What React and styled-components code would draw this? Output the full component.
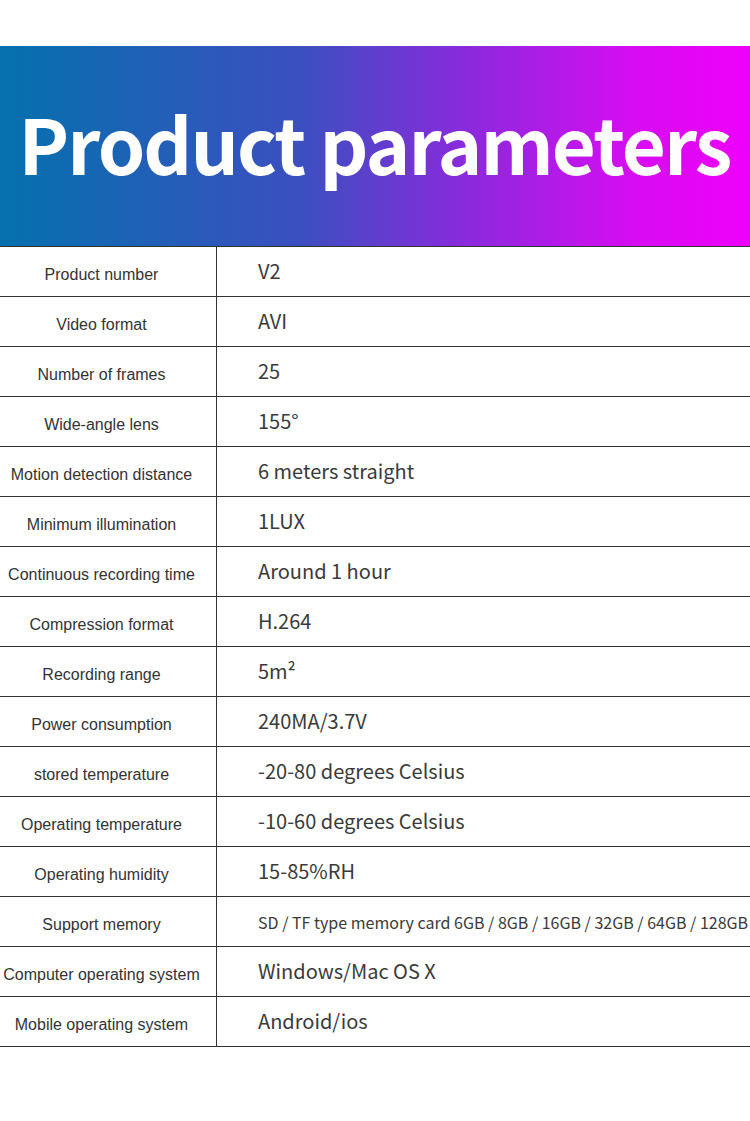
import React from "react";
import styled, { createGlobalStyle } from "styled-components";

const Global = createGlobalStyle`
  html, body { margin: 0; padding: 0; background: #fff; }
  body { width: 750px; }
`;

const Page = styled.div`
  width: 750px;
  padding-top: 46px;
  padding-bottom: 75px;
  background: #fff;
`;

const Banner = styled.div`
  height: 200px;
  background: linear-gradient(90deg, #0571ad 0%, #3c4fc0 40%, #8a2adc 62%, #d80cf2 85%, #ee00fa 100%);
  display: flex;
  align-items: center;
  justify-content: center;
  overflow: hidden;
`;

const Title = styled.h1`
  margin: 0;
  padding-right: 1px;
  color: #fff;
  font-family: "Noto Sans CJK SC", "Noto Sans", sans-serif;
  font-weight: 700;
  font-size: 76px;
  letter-spacing: -1.9px;
  line-height: 1;
  white-space: nowrap;
  transform: translateY(-4px);
`;

const Table = styled.div`
  border-top: 1px solid #333;
`;

const Row = styled.div`
  display: grid;
  grid-template-columns: 217px 1fr;
  height: 50px;
  box-sizing: border-box;
  border-bottom: 1px solid #333;
`;

const Label = styled.div`
  border-right: 1px solid #333;
  display: flex;
  align-items: center;
  justify-content: center;
  padding-top: 7px;
  padding-right: 13px;
  box-sizing: border-box;
  font-family: "Liberation Sans", Arial, sans-serif;
  font-size: 16px;
  color: #333;
  white-space: nowrap;
`;

const Value = styled.div`
  display: flex;
  align-items: center;
  padding-left: 41px;
  padding-bottom: ${p => (p.$small ? 0 : 3)}px;
  font-family: "Noto Sans CJK SC", "Noto Sans", sans-serif;
  font-weight: 400;
  font-size: ${p => (p.$small ? 16 : 20)}px;
  color: #3a3a3a;
  white-space: nowrap;
`;

const rows = [
  ["Product number", "V2"],
  ["Video format", "AVI"],
  ["Number of frames", "25"],
  ["Wide-angle lens", "155°"],
  ["Motion detection distance", "6 meters straight"],
  ["Minimum illumination", "1LUX"],
  ["Continuous recording time", "Around 1 hour"],
  ["Compression format", "H.264"],
  ["Recording range", "5m²"],
  ["Power consumption", "240MA/3.7V"],
  ["stored temperature", "-20-80 degrees Celsius"],
  ["Operating temperature", "-10-60 degrees Celsius"],
  ["Operating humidity", "15-85%RH"],
  ["Support memory", "SD / TF type memory card 6GB / 8GB / 16GB / 32GB / 64GB / 128GB", true],
  ["Computer operating system", "Windows/Mac OS X"],
  ["Mobile operating system", "Android/ios"],
];

export default function App() {
  return (
    <Page>
      <Global />
      <Banner>
        <Title>Product parameters</Title>
      </Banner>
      <Table>
        {rows.map(([k, v, small]) => (
          <Row key={k}>
            <Label>{k}</Label>
            <Value $small={small}>{v}</Value>
          </Row>
        ))}
      </Table>
    </Page>
  );
}
